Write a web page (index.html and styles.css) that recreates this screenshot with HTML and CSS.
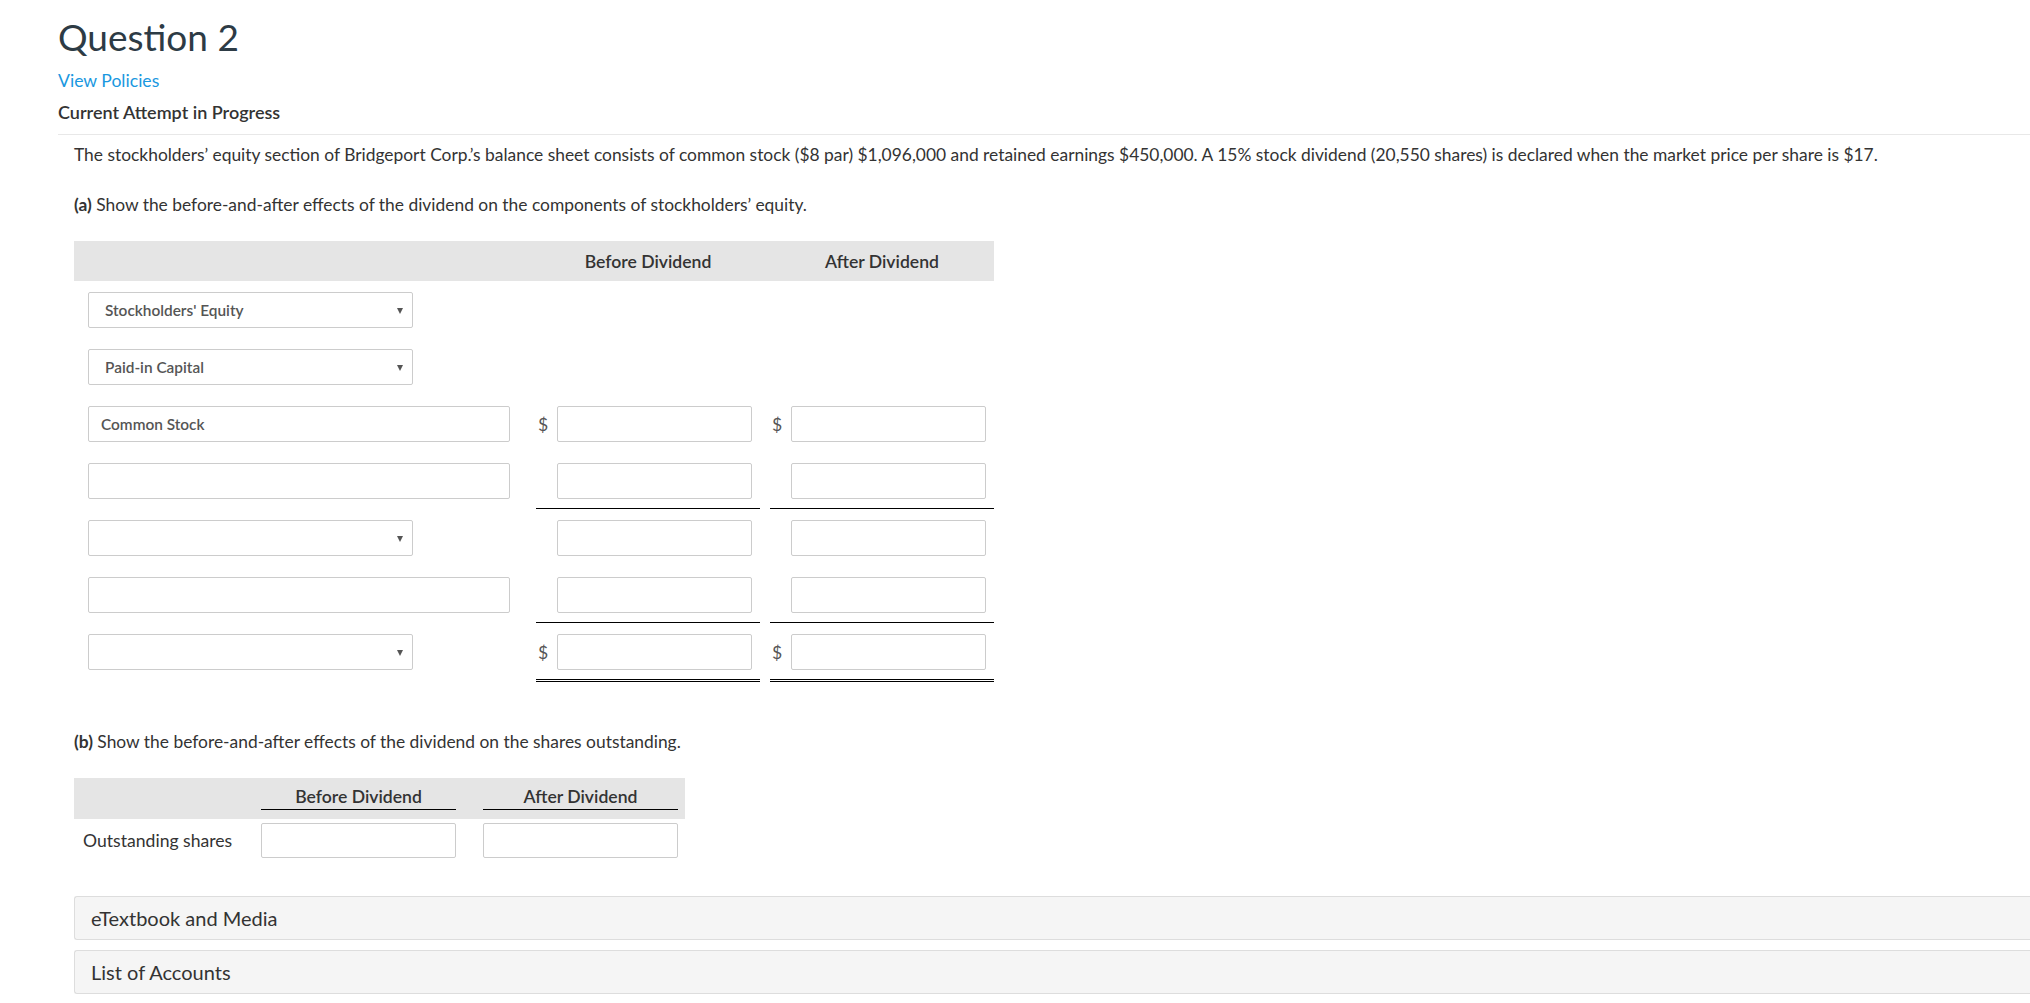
FILE: index.html
```html
<!DOCTYPE html>
<html lang="en">
<head>
<meta charset="utf-8">
<title>Question 2</title>
<link rel="stylesheet" href="styles.css">
</head>
<body>
<main class="page">
  <h1 class="title">Question 2</h1>
  <a class="policies" href="#">View Policies</a>
  <div class="attempt">Current Attempt in Progress</div>
  <section class="question">
    <p class="stem">The stockholders’ equity section of Bridgeport Corp.’s balance sheet consists of common stock ($8 par) $1,096,000 and retained earnings $450,000. A 15% stock dividend (20,550 shares) is declared when the market price per share is $17.</p>
    <p class="part"><b>(a)</b> Show the before-and-after effects of the dividend on the components of stockholders’ equity.</p>

    <div class="sheet">
      <div class="sheet-head">
        <div class="h-label"></div>
        <div class="h-val">Before Dividend</div>
        <div class="h-val">After Dividend</div>
      </div>

      <div class="sheet-row">
        <div class="c-label"><div class="select"><span class="select-text">Stockholders' Equity</span><span class="arrow"></span></div></div>
        <div class="c-val"></div>
        <div class="c-val"></div>
      </div>

      <div class="sheet-row">
        <div class="c-label"><div class="select"><span class="select-text">Paid-in Capital</span><span class="arrow"></span></div></div>
        <div class="c-val"></div>
        <div class="c-val"></div>
      </div>

      <div class="sheet-row">
        <div class="c-label"><input class="text-in" type="text" value="Common Stock"></div>
        <div class="c-val"><span class="dollar">$</span><input class="num-in" type="text"></div>
        <div class="c-val"><span class="dollar">$</span><input class="num-in" type="text"></div>
      </div>

      <div class="sheet-row">
        <div class="c-label"><input class="text-in" type="text"></div>
        <div class="c-val under"><span class="dollar"></span><input class="num-in" type="text"></div>
        <div class="c-val under"><span class="dollar"></span><input class="num-in" type="text"></div>
      </div>

      <div class="sheet-row">
        <div class="c-label"><div class="select"><span class="select-text"></span><span class="arrow"></span></div></div>
        <div class="c-val"><span class="dollar"></span><input class="num-in" type="text"></div>
        <div class="c-val"><span class="dollar"></span><input class="num-in" type="text"></div>
      </div>

      <div class="sheet-row">
        <div class="c-label"><input class="text-in" type="text"></div>
        <div class="c-val under"><span class="dollar"></span><input class="num-in" type="text"></div>
        <div class="c-val under"><span class="dollar"></span><input class="num-in" type="text"></div>
      </div>

      <div class="sheet-row">
        <div class="c-label"><div class="select"><span class="select-text"></span><span class="arrow"></span></div></div>
        <div class="c-val double"><span class="dollar">$</span><input class="num-in" type="text"></div>
        <div class="c-val double"><span class="dollar">$</span><input class="num-in" type="text"></div>
      </div>
    </div>

    <p class="part part-b"><b>(b)</b> Show the before-and-after effects of the dividend on the shares outstanding.</p>

    <div class="shares">
      <div class="shares-head">
        <div class="sh-label"></div>
        <div class="sh-val"><span>Before Dividend</span></div>
        <div class="sh-val sh-second"><span>After Dividend</span></div>
      </div>
      <div class="shares-row">
        <div class="sh-label">Outstanding shares</div>
        <div class="sh-val"><input class="num-in sh-in" type="text"></div>
        <div class="sh-val sh-second"><input class="num-in sh-in" type="text"></div>
      </div>
    </div>

    <div class="panels">
      <div class="panel">eTextbook and Media</div>
      <div class="panel">List of Accounts</div>
    </div>
  </section>
</main>
</body>
</html>
```

FILE: styles.css
```css
html, body {
  margin: 0;
  padding: 0;
  background: #ffffff;
}

body {
  font-family: Lato, "Open Sans", "Liberation Sans", sans-serif;
  color: #333333;
  overflow: hidden;
}

.page {
  padding: 15px 0 0 58px;
}

.title {
  margin: 0;
  font-size: 37px;
  font-weight: 400;
  line-height: 43px;
  color: #2d3b45;
}

.policies {
  display: block;
  margin-top: 13px;
  font-size: 17.6px;
  line-height: 19px;
  color: #1a98e0;
  text-decoration: none;
}

.attempt {
  margin-top: 13px;
  padding-bottom: 12px;
  font-size: 18px;
  line-height: 19px;
  font-weight: 600;
  color: #333333;
  border-bottom: 1px solid #e8e8e8;
}

.question {
  padding-left: 16px;
}

.stem {
  margin: 10px 0 0 0;
  font-size: 17.4px;
  line-height: 19px;
  color: #333333;
}

.part {
  margin: 31px 0 0 0;
  font-size: 17.4px;
  line-height: 19px;
  color: #333333;
}

.part b {
  font-weight: 700;
}

/* Part (a) worksheet */
.sheet {
  width: 920px;
  margin-top: 27px;
}

.sheet-head {
  display: flex;
  height: 40px;
  align-items: center;
  background: #e5e5e5;
  column-gap: 10px;
}

.h-label {
  width: 452px;
}

.h-val {
  width: 224px;
  text-align: center;
  font-size: 17.6px;
  font-weight: 600;
  color: #333333;
}

.sheet-row {
  display: flex;
  column-gap: 10px;
}

.c-label {
  width: 438px;
  padding: 11px 0 10px 14px;
  height: 36px;
}

.c-val {
  width: 224px;
  padding: 11px 0 10px 0;
  height: 36px;
  display: flex;
  align-items: center;
}

.c-val.under {
  padding-bottom: 9px;
  border-bottom: 1px solid #000000;
}

.c-val.double {
  padding-bottom: 9px;
  border-bottom: 3px double #000000;
}

.dollar {
  width: 21px;
  padding-left: 2px;
  box-sizing: border-box;
  font-size: 17.6px;
  color: #555555;
}

.num-in {
  box-sizing: border-box;
  width: 195px;
  height: 36px;
  margin: 0;
  border: 1px solid #cccccc;
  border-radius: 2px;
  background: #ffffff;
  font-family: inherit;
  font-size: 15px;
  padding: 0 10px;
  outline: none;
}

.text-in {
  box-sizing: border-box;
  width: 422px;
  height: 36px;
  margin: 0;
  border: 1px solid #cccccc;
  border-radius: 2px;
  background: #ffffff;
  font-family: inherit;
  font-size: 15.4px;
  font-weight: 600;
  color: #555555;
  padding: 0 12px;
  outline: none;
}

.select {
  position: relative;
  box-sizing: border-box;
  width: 325px;
  height: 36px;
  border: 1px solid #cccccc;
  border-radius: 2px;
  background: #ffffff;
  display: flex;
  align-items: center;
  padding-left: 16px;
}

.select-text {
  font-size: 15.4px;
  font-weight: 600;
  color: #555555;
}

.arrow {
  position: absolute;
  right: 9px;
  top: 15px;
  width: 0;
  height: 0;
  border-left: 3px solid transparent;
  border-right: 3px solid transparent;
  border-top: 6px solid #555555;
}

.part-b {
  margin-top: 50px;
}

/* Part (b) shares */
.shares {
  width: 611px;
  margin-top: 27px;
}

.shares-head {
  display: flex;
  height: 41px;
  background: #e5e5e5;
}

.shares-row {
  display: flex;
  padding-top: 4px;
  align-items: center;
}

.sh-label {
  flex: none;
  box-sizing: border-box;
  width: 187px;
  padding-left: 9px;
  font-size: 17.6px;
  color: #333333;
}

.sh-val {
  flex: none;
  width: 195px;
}

.sh-second {
  margin-left: 27px;
}

.shares-head .sh-val span {
  display: block;
  margin-top: 7px;
  height: 24px;
  line-height: 24px;
  text-align: center;
  font-size: 17.6px;
  font-weight: 600;
  color: #333333;
  border-bottom: 1px solid #000000;
}

.sh-in {
  height: 35px;
}

.panels {
  margin-top: 38px;
  display: flex;
  flex-direction: column;
  row-gap: 10px;
}

.panel {
  box-sizing: border-box;
  height: 44px;
  display: flex;
  align-items: center;
  padding-left: 16px;
  background: #f5f5f5;
  border: 1px solid #dddddd;
  border-right: none;
  border-radius: 3px 0 0 3px;
  font-size: 20px;
  color: #333333;
}
```
